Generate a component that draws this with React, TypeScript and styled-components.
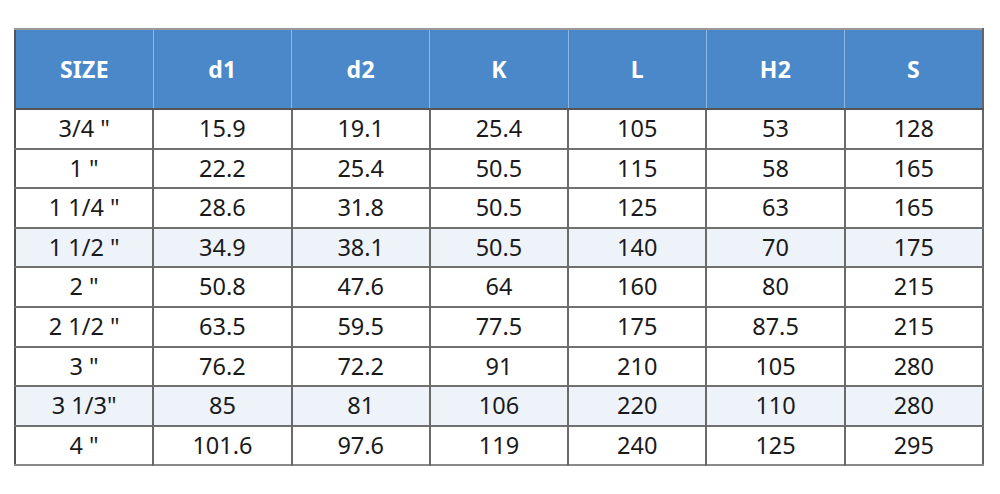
import React from "react";
import styled, { createGlobalStyle } from "styled-components";

const Global = createGlobalStyle`
  html, body { margin: 0; padding: 0; background: #fff; }
  body { font-family: "Noto Sans", "Open Sans", sans-serif; }
`;

const Page = styled.div`
  width: 1000px;
  height: 494px;
  box-sizing: border-box;
  padding: 28px 16px 0 14px;
`;

const Table = styled.table`
  width: 970px;
  border-collapse: collapse;
  table-layout: fixed;
  border-top: 2px solid #9a9a9a;
  border-bottom: 2px solid #8a8a8a;
  border-left: 2px solid #555;
  border-right: 2px solid #666;
`;

const Th = styled.th`
  height: 78px;
  padding: 0;
  background: #4a88c9;
  color: #fff;
  font-size: 23px;
  font-weight: 700;
  letter-spacing: 0.3px;
  text-align: center;
  border-left: 1px solid #8fb6e0;
  border-bottom: 2px solid #555;
  &:first-child { border-left: none; }
`;

const Tr = styled.tr<{ $alt: boolean }>`
  background: ${(p) => (p.$alt ? "#eef3fa" : "#fff")};
`;

const Td = styled.td`
  height: 37.6px;
  padding: 0;
  text-align: center;
  color: #1a1a1a;
  font-size: 23.5px;
  line-height: 1;
  border-left: 2px solid #6a6a6a;
  border-top: 2px solid #707070;
  &:first-child { border-left: none; }
`;

const headers = ["SIZE", "d1", "d2", "K", "L", "H2", "S"];
const rows: string[][] = [
  ["3/4 \"", "15.9", "19.1", "25.4", "105", "53", "128"],
  ["1 \"", "22.2", "25.4", "50.5", "115", "58", "165"],
  ["1 1/4 \"", "28.6", "31.8", "50.5", "125", "63", "165"],
  ["1 1/2 \"", "34.9", "38.1", "50.5", "140", "70", "175"],
  ["2 \"", "50.8", "47.6", "64", "160", "80", "215"],
  ["2 1/2 \"", "63.5", "59.5", "77.5", "175", "87.5", "215"],
  ["3 \"", "76.2", "72.2", "91", "210", "105", "280"],
  ["3 1/3\"", "85", "81", "106", "220", "110", "280"],
  ["4 \"", "101.6", "97.6", "119", "240", "125", "295"],
];

export default function App() {
  return (
    <Page>
      <Global />
      <Table>
        <thead>
          <tr>
            {headers.map((h) => (
              <Th key={h}>{h}</Th>
            ))}
          </tr>
        </thead>
        <tbody>
          {rows.map((r, i) => (
            <Tr key={i} $alt={i === 3 || i === 7}>
              {r.map((c, j) => (
                <Td key={j}>{c}</Td>
              ))}
            </Tr>
          ))}
        </tbody>
      </Table>
    </Page>
  );
}
